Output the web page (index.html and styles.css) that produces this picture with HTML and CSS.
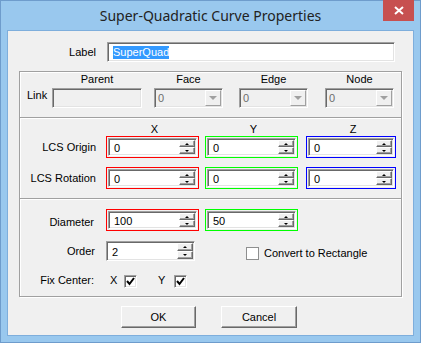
FILE: index.html
```html
<!DOCTYPE html>
<html lang="en">
<head>
    <meta charset="UTF-8">
    <title>Super-Quadratic Curve Properties</title>
    <link rel="stylesheet" href="styles.css">
</head>
<body>
    <div class="ablak">
        <div class="cimsor">
            <span></span>
            <div class="cim">Super-Quadratic Curve Properties</div>
            <div class="bezar">
                <svg width="10" height="9" viewBox="0 0 10 9"><path d="M1 1 L9 8 M9 1 L1 8" stroke="#fff" stroke-width="2"/></svg>
            </div>
        </div>

        <div class="tartalom">
            <div class="cimke-sor">
                <span class="felirat">Label</span>
                <div class="mezo szoveg"><span class="kijeloles">SuperQuad</span></div>
            </div>

            <div class="csoport link-csoport">
                <div class="fej c-parent">Parent</div>
                <div class="fej c-face">Face</div>
                <div class="fej c-edge">Edge</div>
                <div class="fej c-node">Node</div>

                <div class="link-felirat">Link</div>
                <div class="mezo tiltott c-parent"></div>
                <div class="kombo c-face"><span>0</span><div class="lenyilo"><i></i></div></div>
                <div class="kombo c-edge"><span>0</span><div class="lenyilo"><i></i></div></div>
                <div class="kombo c-node"><span>0</span><div class="lenyilo"><i></i></div></div>
            </div>

            <div class="csoport lcs-csoport">
                <div class="xyz-fej">
                    <span></span>
                    <div>X</div>
                    <div>Y</div>
                    <div>Z</div>
                </div>
                <div class="xyz-sor">
                    <span class="felirat">LCS Origin</span>
                    <div class="keret piros"><div class="mezo spin"><span>0</span><div class="leptet"><b class="fel"></b><b class="le"></b></div></div></div>
                    <div class="keret zold"><div class="mezo spin"><span>0</span><div class="leptet"><b class="fel"></b><b class="le"></b></div></div></div>
                    <div class="keret kek"><div class="mezo spin"><span>0</span><div class="leptet"><b class="fel"></b><b class="le"></b></div></div></div>
                </div>
                <div class="xyz-sor">
                    <span class="felirat">LCS Rotation</span>
                    <div class="keret piros"><div class="mezo spin"><span>0</span><div class="leptet"><b class="fel"></b><b class="le"></b></div></div></div>
                    <div class="keret zold"><div class="mezo spin"><span>0</span><div class="leptet"><b class="fel"></b><b class="le"></b></div></div></div>
                    <div class="keret kek"><div class="mezo spin"><span>0</span><div class="leptet"><b class="fel"></b><b class="le"></b></div></div></div>
                </div>
            </div>

            <div class="csoport alak-csoport">
                <div class="xyz-sor atmero-sor">
                    <span class="felirat">Diameter</span>
                    <div class="keret piros"><div class="mezo spin"><span>100</span><div class="leptet"><b class="fel"></b><b class="le"></b></div></div></div>
                    <div class="keret zold"><div class="mezo spin"><span>50</span><div class="leptet"><b class="fel"></b><b class="le"></b></div></div></div>
                </div>
                <div class="rend-sor">
                    <span class="felirat">Order</span>
                    <div class="mezo spin rend"><span>2</span><div class="leptet"><b class="fel"></b><b class="le"></b></div></div>
                    <div class="jelolo ures"></div>
                    <span class="jelolo-szoveg">Convert to Rectangle</span>
                </div>
                <div class="fix-sor">
                    <span class="felirat">Fix Center:</span>
                    <span class="tengely">X</span>
                    <div class="jelolo"><svg width="9" height="9" viewBox="0 0 9 9"><path d="M1 4 L3.5 7 L8 1" stroke="#000" stroke-width="2" fill="none"/></svg></div>
                    <span class="tengely tengely-y">Y</span>
                    <div class="jelolo"><svg width="9" height="9" viewBox="0 0 9 9"><path d="M1 4 L3.5 7 L8 1" stroke="#000" stroke-width="2" fill="none"/></svg></div>
                </div>
            </div>

            <div class="gombok">
                <button class="gomb ok">OK</button>
                <button class="gomb megse">Cancel</button>
            </div>
        </div>
    </div>
</body>
</html>
```

FILE: styles.css
```css
* {
    box-sizing: border-box;
    margin: 0;
    padding: 0;
}

body {
    width: 421px;
    height: 343px;
    overflow: hidden;
    font-family: "Liberation Sans", Arial, sans-serif;
    font-size: 11px;
    line-height: 13px;
    color: #000;
}

.ablak {
    width: 421px;
    height: 343px;
    border: 1px solid #6e9ccc;
    background-color: #99c8ee;
    padding: 0 6px 6px 6px;
}

.cimsor {
    display: grid;
    grid-template-columns: 37px 1fr 37px;
    align-items: center;
    height: 29px;
    margin: 0 -6px;
}

.cim {
    text-align: center;
    font-family: "Noto Sans", "Open Sans", sans-serif;
    font-size: 14px;
    color: #222;
    line-height: 20px;
}

.bezar {
    align-self: start;
    margin-top: -1px;
    width: 31px;
    height: 21px;
    background-color: #c75050;
    display: flex;
    align-items: center;
    justify-content: center;
}

.tartalom {
    height: 306px;
    border: 1px solid #7eaedc;
    background-color: #f0f0f0;
    padding: 11px 11px 0 11px;
}

/* beviteli mezok */
.mezo {
    background: #fff;
    border: 1px solid;
    border-color: #a0a0a0 #fff #fff #a0a0a0;
    box-shadow: inset 1px 1px 0 #696969, inset -1px -1px 0 #e3e3e3;
}

.tiltott {
    background: #f0f0f0;
}

.felirat {
    text-align: right;
    white-space: nowrap;
}

.cimke-sor {
    display: flex;
    align-items: center;
    height: 20px;
}

.cimke-sor .felirat {
    width: 77px;
}

.szoveg {
    margin-left: 11px;
    width: 288px;
    height: 20px;
    padding: 2px 0 0 5px;
}

.kijeloles {
    display: inline-block;
    background: #3399ff;
    color: #fff;
    line-height: 13px;
    margin-top: 1px;
}

/* csoportok */
.csoport {
    border: 1px solid #a0a0a0;
    box-shadow: inset 1px 1px 0 #fff, 1px 1px 0 #fff;
}

.link-csoport {
    margin-top: 9px;
    height: 47px;
    display: grid;
    grid-template-columns: 32px 90px 12px 69px 16px 69px 17px 69px;
    grid-template-rows: 13px 20px;
    row-gap: 2px;
    padding-top: 1px;
}

.fej {
    text-align: center;
    grid-row: 1;
}

.c-parent { grid-column: 2; }
.c-face { grid-column: 4; }
.c-edge { grid-column: 6; }
.c-node { grid-column: 8; }

.link-felirat {
    grid-row: 2;
    grid-column: 1;
    padding-left: 7px;
    margin-top: 1px;
}

.link-csoport .mezo,
.kombo {
    grid-row: 2;
}

.kombo {
    display: flex;
    align-items: stretch;
    background: #f0f0f0;
    border: 1px solid;
    border-color: #a0a0a0 #fff #fff #a0a0a0;
    box-shadow: inset 1px 1px 0 #696969, inset -1px -1px 0 #e3e3e3;
    padding: 1px 1px 1px 1px;
}

.kombo span {
    flex: 1;
    color: #6d6d6d;
    padding: 2px 0 0 2px;
}

.lenyilo {
    width: 16px;
    border: 1px solid;
    border-color: #fff #a0a0a0 #a0a0a0 #fff;
    display: flex;
    align-items: center;
    justify-content: center;
    background: #f0f0f0;
}

.lenyilo i {
    width: 0;
    height: 0;
    border-left: 4px solid transparent;
    border-right: 4px solid transparent;
    border-top: 4px solid #a0a0a0;
}

.lcs-csoport {
    margin-top: -1px;
    height: 82px;
    padding-top: 5px;
}

.xyz-fej,
.xyz-sor {
    display: grid;
    grid-template-columns: 80px 93px 93px 92px;
    column-gap: 6px;
    align-items: center;
}

.xyz-fej {
    height: 13px;
}

.xyz-fej > div {
    text-align: center;
    padding-left: 4px;
}

.xyz-fej > span,
.xyz-sor > .felirat {
    margin-right: 4px;
}

.xyz-fej > div:last-child,
.xyz-sor > .kek {
    margin-left: 2px;
}

.xyz-sor {
    height: 22px;
}

.xyz-sor + .xyz-sor {
    margin-top: 9px;
}

.keret {
    height: 22px;
    border: 1px solid;
    padding: 1px;
}

.piros { border-color: #ff0000; }
.zold { border-color: #00ff00; }
.kek { border-color: #0000ff; }

.spin {
    display: flex;
    height: 18px;
    padding: 1px 1px 1px 1px;
}

.spin span {
    flex: 1;
    padding: 1px 0 0 4px;
    line-height: 14px;
}

.leptet {
    width: 16px;
    display: flex;
    flex-direction: column;
}

.leptet b {
    flex: 1;
    border: 1px solid;
    border-color: #fff #696969 #696969 #fff;
    box-shadow: inset -1px -1px 0 #a0a0a0;
    background: #f0f0f0;
    display: flex;
    align-items: center;
    justify-content: center;
}

.leptet b::after {
    content: "";
    width: 0;
    height: 0;
    border-left: 2px solid transparent;
    border-right: 2px solid transparent;
}

.leptet .fel::after {
    border-bottom: 2px solid #000;
}

.leptet .le::after {
    border-top: 2px solid #000;
}

.alak-csoport {
    margin-top: -1px;
    height: 99px;
    padding-top: 10px;
}

.atmero-sor .felirat {
    margin-top: 5px;
    margin-right: 6px;
}

.rend-sor {
    display: flex;
    align-items: center;
    margin-top: 10px;
    height: 20px;
}

.rend-sor .felirat {
    width: 75px;
}

.rend {
    margin-left: 11px;
    width: 89px;
    height: 20px;
}

.rend span {
    padding-top: 2px;
}

.jelolo {
    width: 13px;
    height: 13px;
    background: #fff;
    border: 1px solid;
    border-color: #a0a0a0 #fff #fff #a0a0a0;
    box-shadow: inset 1px 1px 0 #696969, inset -1px -1px 0 #e3e3e3;
    display: flex;
    align-items: center;
    justify-content: center;
}

.jelolo.ures {
    margin-left: 51px;
    margin-top: 4px;
    border: 1px solid #8e8f8f;
    box-shadow: none;
}

.jelolo-szoveg {
    margin-left: 5px;
    margin-top: 4px;
}

.fix-sor {
    display: flex;
    align-items: center;
    margin-top: 14px;
    height: 13px;
}

.fix-sor .felirat {
    width: 74px;
    margin-top: -2px;
}

.tengely {
    margin-left: 16px;
    width: 14px;
    margin-top: -2px;
}

.tengely-y {
    margin-left: 21px;
    width: 16px;
}

.gombok {
    display: flex;
    justify-content: center;
    gap: 25px;
    margin-top: 9px;
    padding-right: 3px;
}

.gomb {
    height: 22px;
    font-family: "Liberation Sans", Arial, sans-serif;
    font-size: 11px;
    color: #000;
    background: #f0f0f0;
    border: 1px solid;
    border-color: #fff #696969 #696969 #fff;
    box-shadow: inset -1px -1px 0 #a0a0a0;
}

.ok { width: 75px; }
.megse { width: 76px; }
```
